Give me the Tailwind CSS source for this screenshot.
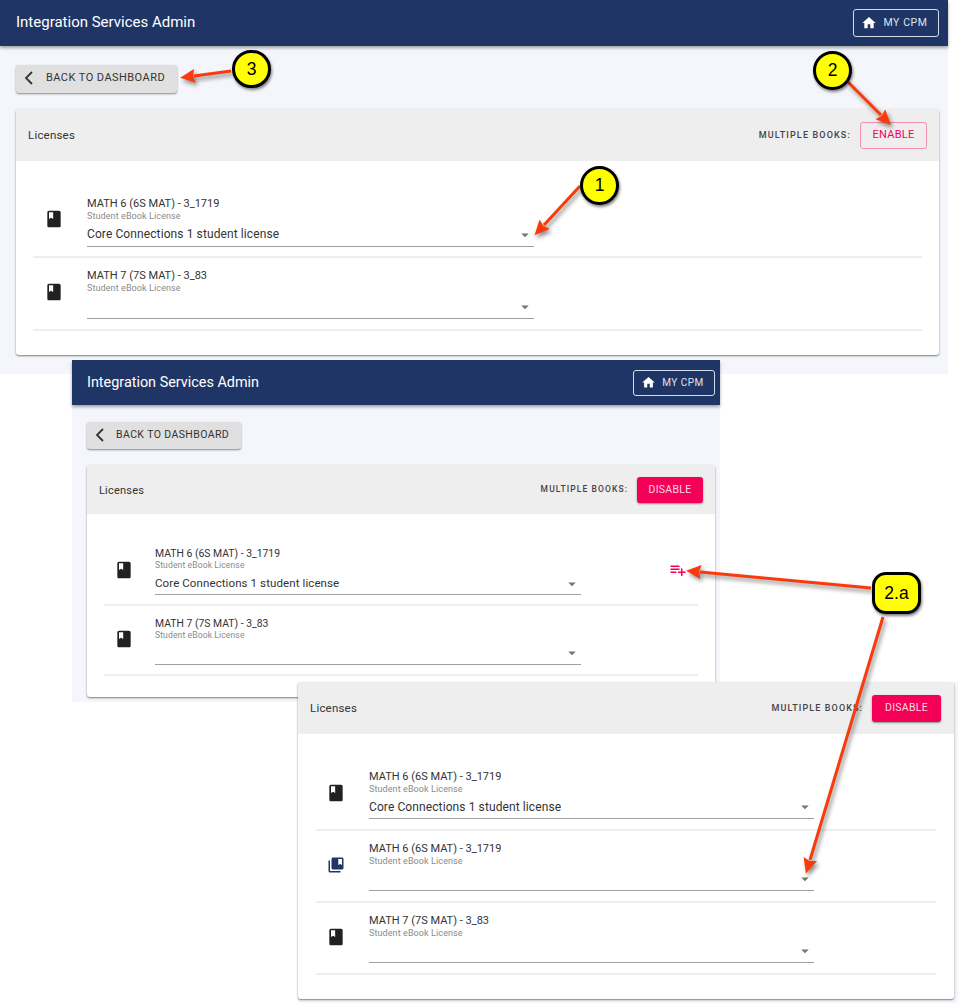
<!DOCTYPE html>
<html lang="en">
<head>
    <meta charset="UTF-8">
    <title>Integration Services Admin</title>
    <script src="https://cdn.jsdelivr.net/npm/@tailwindcss/browser@4"></script>
</head>
<body class="bg-white">
<div class="relative w-[958px] h-[1003px] overflow-hidden font-['Roboto',sans-serif]">

    <!-- screenshot 1 -->
    <section class="absolute left-0 top-0 w-[948px] h-[374px] bg-[#f4f6fb] flex flex-col">
        <header class="h-[46px] shrink-0 bg-[#1f3566] shadow-[0_2px_3px_rgba(0,0,0,0.35)] flex items-center justify-between pl-4 pr-[9px]">
            <span class="pb-[2px] text-white text-[15px]">Integration Services Admin</span>
            <span class="w-[86px] h-[28px] border-[1.5px] border-[#d5dcec] rounded-[3px] flex items-center justify-center gap-[6px] pr-[3px] text-[#dfe4ef] text-[10.5px] tracking-[0.6px]">
                <svg class="w-[16px] h-[16px]" viewBox="0 0 24 24" fill="#fff"><path d="M10 20v-6h4v6h5v-8h3L12 3 2 12h3v8z"/></svg>MY CPM
            </span>
        </header>
        <div class="px-4 pt-[19px]">
            <span class="w-[161px] h-[28px] pb-[2px] bg-[#e0e0e0] rounded-[3px] shadow-[0_1px_2px_rgba(0,0,0,0.45)] flex items-center pl-[8px] gap-[12px] text-[#333] text-[11px] tracking-[0.45px]">
                <svg class="w-[10px] h-[14px]" viewBox="0 0 10 14" fill="none" stroke="#333" stroke-width="1.8"><path d="M8 1L2 7l6 6"/></svg>BACK TO DASHBOARD
            </span>
            <div class="mt-4 w-[923px] h-[246px] bg-white rounded-[3px] shadow-[0_1px_2px_rgba(0,0,0,0.5)]">
                <div class="h-[52px] bg-[#eeeeee] flex items-center justify-between pl-3 pr-3">
                    <span class="pt-[2px] text-[#333] text-[11.5px] tracking-[0.2px]">Licenses</span>
                    <div class="flex items-center gap-[9px]">
                        <span class="pt-[1px] text-[#444] text-[9px] font-medium tracking-[1.15px]">MULTIPLE BOOKS:</span>
                        <span class="w-[67px] h-[27px] border-[1.5px] border-[#f48fb1] rounded-[3px] flex items-center justify-center text-[#f50057] text-[11px] tracking-[0.3px]">ENABLE</span>
                    </div>
                </div>
                <div class="pt-[24px] px-[17px]">
                    <div class="h-[73px] border-b-2 border-[#eeeeee] flex pt-[12px]">
                        <div class="w-[54px] shrink-0 pl-[11px] pt-[12px]">
                            <svg class="w-[20px] h-[20px]" viewBox="0 0 24 24" fill="#212121"><path d="M18 2H6c-1.1 0-2 .9-2 2v16c0 1.1.9 2 2 2h12c1.1 0 2-.9 2-2V4c0-1.1-.9-2-2-2zM6 4h5v8l-2.5-1.5L6 12V4z"/></svg>
                        </div>
                        <div class="w-[447px]">
                            <p class="h-[14px] leading-[14px] text-[#333] text-[11px]">MATH 6 (6S MAT) - 3_1719</p>
                            <p class="h-[11px] leading-[11px] text-[#8a8a8a] text-[9px] tracking-[0.1px]">Student eBook License</p>
                            <div class="h-[25px] border-b-[1.5px] border-[#9e9e9e] flex items-center justify-between text-[#333] text-[12px] tracking-[0.1px]">
                                <span>Core Connections 1 student license</span>
                                <svg class="mt-[2px] w-[18px] h-[18px]" viewBox="0 0 24 24" fill="#757575"><path d="M7 10l5 5 5-5z"/></svg>
                            </div>
                        </div>
                    </div>
                    <div class="h-[73px] border-b-2 border-[#eeeeee] flex pt-[11px]">
                        <div class="w-[54px] shrink-0 pl-[11px] pt-[13px]">
                            <svg class="w-[20px] h-[20px]" viewBox="0 0 24 24" fill="#212121"><path d="M18 2H6c-1.1 0-2 .9-2 2v16c0 1.1.9 2 2 2h12c1.1 0 2-.9 2-2V4c0-1.1-.9-2-2-2zM6 4h5v8l-2.5-1.5L6 12V4z"/></svg>
                        </div>
                        <div class="w-[447px]">
                            <p class="h-[14px] leading-[14px] text-[#333] text-[11px]">MATH 7 (7S MAT) - 3_83</p>
                            <p class="h-[11px] leading-[11px] text-[#8a8a8a] text-[9px] tracking-[0.1px]">Student eBook License</p>
                            <div class="h-[25px] border-b-[1.5px] border-[#9e9e9e] flex items-center justify-end">
                                <svg class="mt-[2px] w-[18px] h-[18px]" viewBox="0 0 24 24" fill="#757575"><path d="M7 10l5 5 5-5z"/></svg>
                            </div>
                        </div>
                    </div>
                </div>
            </div>
        </div>
    </section>

    <!-- screenshot 2 -->
    <section class="absolute left-[72px] top-[360px] w-[648px] h-[342px] bg-[#f4f6fb] flex flex-col">
        <header class="h-[45px] shrink-0 bg-[#1f3566] shadow-[0_2px_3px_rgba(0,0,0,0.35)] flex items-center justify-between pl-[15px] pr-[5px]">
            <span class="text-white text-[14.4px]">Integration Services Admin</span>
            <span class="w-[82px] h-[26px] border-[1.5px] border-[#d5dcec] rounded-[3px] flex items-center justify-center gap-[6px] pr-[3px] text-[#dfe4ef] text-[10px] tracking-[0.5px]">
                <svg class="w-[15px] h-[15px]" viewBox="0 0 24 24" fill="#fff"><path d="M10 20v-6h4v6h5v-8h3L12 3 2 12h3v8z"/></svg>MY CPM
            </span>
        </header>
        <div class="px-[15px] pt-[17px]">
            <span class="w-[154px] h-[27px] pb-[2px] bg-[#e0e0e0] rounded-[3px] shadow-[0_1px_2px_rgba(0,0,0,0.45)] flex items-center pl-[8px] gap-[11px] text-[#333] text-[10.5px] tracking-[0.4px]">
                <svg class="w-[10px] h-[14px]" viewBox="0 0 10 14" fill="none" stroke="#333" stroke-width="1.8"><path d="M8 1L2 7l6 6"/></svg>BACK TO DASHBOARD
            </span>
            <div class="mt-4 w-[628px] h-[232px] bg-white rounded-[3px] shadow-[0_1px_2px_rgba(0,0,0,0.5)]">
                <div class="h-[49px] bg-[#eeeeee] flex items-center justify-between pl-3 pr-3">
                    <span class="pt-[3px] text-[#333] text-[11px] tracking-[0.2px]">Licenses</span>
                    <div class="flex items-center gap-[9px]">
                        <span class="text-[#444] text-[8.5px] font-medium tracking-[1.1px]">MULTIPLE BOOKS:</span>
                        <span class="w-[66px] h-[26px] bg-[#f50057] rounded-[3px] shadow-[0_1px_2px_rgba(0,0,0,0.4)] flex items-center justify-center text-[#ffd6e4] text-[10.5px] tracking-[0.3px]">DISABLE</span>
                    </div>
                </div>
                <div class="pt-[22px] px-[17px]">
                    <div class="h-[70px] border-b-2 border-[#eeeeee] flex pt-[11px]">
                        <div class="w-[51px] shrink-0 pl-[10px] pt-[13px]">
                            <svg class="w-[20px] h-[20px]" viewBox="0 0 24 24" fill="#212121"><path d="M18 2H6c-1.1 0-2 .9-2 2v16c0 1.1.9 2 2 2h12c1.1 0 2-.9 2-2V4c0-1.1-.9-2-2-2zM6 4h5v8l-2.5-1.5L6 12V4z"/></svg>
                        </div>
                        <div class="w-[426px]">
                            <p class="h-[13px] leading-[13px] text-[#333] text-[10.4px]">MATH 6 (6S MAT) - 3_1719</p>
                            <p class="h-[11px] leading-[11px] text-[#8a8a8a] text-[8.6px] tracking-[0.1px]">Student eBook License</p>
                            <div class="h-[24px] pt-[2px] border-b-[1.5px] border-[#9e9e9e] flex items-center justify-between text-[#333] text-[11.5px] tracking-[0.1px]">
                                <span>Core Connections 1 student license</span>
                                <svg class="w-[18px] h-[18px]" viewBox="0 0 24 24" fill="#757575"><path d="M7 10l5 5 5-5z"/></svg>
                            </div>
                        </div>
                        <div class="ml-auto pr-[11px] pt-[14px]">
                            <svg class="w-[18px] h-[18px]" viewBox="0 0 24 24" fill="#f50057"><path d="M14 10H2v2h12v-2zm0-4H2v2h12V6zm4 8v-4h-2v4h-4v2h4v4h2v-4h4v-2h-4zM2 16h8v-2H2v2z"/></svg>
                        </div>
                    </div>
                    <div class="h-[70px] border-b-2 border-[#eeeeee] flex pt-[11px]">
                        <div class="w-[51px] shrink-0 pl-[10px] pt-[12px]">
                            <svg class="w-[20px] h-[20px]" viewBox="0 0 24 24" fill="#212121"><path d="M18 2H6c-1.1 0-2 .9-2 2v16c0 1.1.9 2 2 2h12c1.1 0 2-.9 2-2V4c0-1.1-.9-2-2-2zM6 4h5v8l-2.5-1.5L6 12V4z"/></svg>
                        </div>
                        <div class="w-[426px]">
                            <p class="h-[13px] leading-[13px] text-[#333] text-[10.4px]">MATH 7 (7S MAT) - 3_83</p>
                            <p class="h-[11px] leading-[11px] text-[#8a8a8a] text-[8.6px] tracking-[0.1px]">Student eBook License</p>
                            <div class="h-[24px] border-b-[1.5px] border-[#9e9e9e] flex items-center justify-end">
                                <svg class="w-[18px] h-[18px]" viewBox="0 0 24 24" fill="#757575"><path d="M7 10l5 5 5-5z"/></svg>
                            </div>
                        </div>
                    </div>
                </div>
            </div>
        </div>
    </section>

    <!-- screenshot 3 -->
    <section class="absolute left-[298px] top-[682px] w-[660px] h-[321px] bg-[#f4f6fb]">
        <div class="w-[656px] h-[317px] bg-white rounded-[3px] shadow-[0_1px_2px_rgba(0,0,0,0.5)]">
            <div class="h-[52px] bg-[#eeeeee] flex items-center justify-between pl-3 pr-[13px]">
                <span class="pt-[2px] text-[#333] text-[11.5px] tracking-[0.2px]">Licenses</span>
                <div class="flex items-center gap-[9px]">
                    <span class="pt-[1px] text-[#444] text-[9px] font-medium tracking-[1.1px]">MULTIPLE BOOKS:</span>
                    <span class="w-[69px] h-[27px] bg-[#f50057] rounded-[3px] shadow-[0_1px_2px_rgba(0,0,0,0.4)] flex items-center justify-center text-[#ffd6e4] text-[10.5px] tracking-[0.3px]">DISABLE</span>
                </div>
            </div>
            <div class="pt-[25px] pl-[18px] pr-[18px]">
                <div class="h-[72px] border-b-2 border-[#eeeeee] flex pt-[11px]">
                    <div class="w-[53px] shrink-0 pl-[10px] pt-[13px]">
                        <svg class="w-[20px] h-[20px]" viewBox="0 0 24 24" fill="#212121"><path d="M18 2H6c-1.1 0-2 .9-2 2v16c0 1.1.9 2 2 2h12c1.1 0 2-.9 2-2V4c0-1.1-.9-2-2-2zM6 4h5v8l-2.5-1.5L6 12V4z"/></svg>
                    </div>
                    <div class="w-[445px]">
                        <p class="h-[14px] leading-[14px] text-[#333] text-[11px]">MATH 6 (6S MAT) - 3_1719</p>
                        <p class="h-[10px] leading-[10px] text-[#8a8a8a] text-[9px] tracking-[0.1px]">Student eBook License</p>
                        <div class="h-[25px] pt-[2px] border-b-[1.5px] border-[#9e9e9e] flex items-center justify-between text-[#333] text-[12px] tracking-[0.1px]">
                            <span>Core Connections 1 student license</span>
                            <svg class="w-[18px] h-[18px]" viewBox="0 0 24 24" fill="#757575"><path d="M7 10l5 5 5-5z"/></svg>
                        </div>
                    </div>
                </div>
                <div class="h-[72px] border-b-2 border-[#eeeeee] flex pt-[11px]">
                    <div class="w-[53px] shrink-0 pl-[11px] pt-[14px]">
                        <svg class="w-[18px] h-[18px]" viewBox="0 0 24 24" fill="#1f3566"><path d="M4 6H2v14c0 1.1.9 2 2 2h14v-2H4V6zm16-4H8c-1.1 0-2 .9-2 2v12c0 1.1.9 2 2 2h12c1.1 0 2-.9 2-2V4c0-1.1-.9-2-2-2zm0 10l-2.5-1.5L15 12V4h5v8z"/></svg>
                    </div>
                    <div class="w-[445px]">
                        <p class="h-[14px] leading-[14px] text-[#333] text-[11px]">MATH 6 (6S MAT) - 3_1719</p>
                        <p class="h-[10px] leading-[10px] text-[#8a8a8a] text-[9px] tracking-[0.1px]">Student eBook License</p>
                        <div class="h-[25px] pt-[2px] border-b-[1.5px] border-[#9e9e9e] flex items-center justify-end">
                            <svg class="w-[18px] h-[18px]" viewBox="0 0 24 24" fill="#757575"><path d="M7 10l5 5 5-5z"/></svg>
                        </div>
                    </div>
                </div>
                <div class="h-[72px] border-b-2 border-[#eeeeee] flex pt-[11px]">
                    <div class="w-[53px] shrink-0 pl-[10px] pt-[13px]">
                        <svg class="w-[20px] h-[20px]" viewBox="0 0 24 24" fill="#212121"><path d="M18 2H6c-1.1 0-2 .9-2 2v16c0 1.1.9 2 2 2h12c1.1 0 2-.9 2-2V4c0-1.1-.9-2-2-2zM6 4h5v8l-2.5-1.5L6 12V4z"/></svg>
                    </div>
                    <div class="w-[445px]">
                        <p class="h-[14px] leading-[14px] text-[#333] text-[11px]">MATH 7 (7S MAT) - 3_83</p>
                        <p class="h-[10px] leading-[10px] text-[#8a8a8a] text-[9px] tracking-[0.1px]">Student eBook License</p>
                        <div class="h-[25px] pt-[2px] border-b-[1.5px] border-[#9e9e9e] flex items-center justify-end">
                            <svg class="w-[18px] h-[18px]" viewBox="0 0 24 24" fill="#757575"><path d="M7 10l5 5 5-5z"/></svg>
                        </div>
                    </div>
                </div>
            </div>
        </div>
    </section>

    <!-- arrows -->
    <svg class="absolute left-0 top-0 w-[958px] h-[1003px] drop-shadow-[2px_3px_2px_rgba(0,0,0,0.45)]" viewBox="0 0 958 1003" fill="none" stroke="#fa3a0c" stroke-width="3">
        <defs>
            <marker id="head" markerUnits="userSpaceOnUse" markerWidth="16" markerHeight="14" refX="1" refY="7" orient="auto">
                <path d="M0 0L15 7L0 14L2 7z" fill="#fa3a0c" stroke="none"/>
            </marker>
        </defs>
        <line x1="231" y1="71" x2="194" y2="76" marker-end="url(#head)"/>
        <line x1="848" y1="82" x2="881" y2="115" marker-end="url(#head)"/>
        <line x1="580" y1="186" x2="544" y2="225" marker-end="url(#head)"/>
        <line x1="871" y1="588" x2="700" y2="572" marker-end="url(#head)"/>
        <line x1="883" y1="617" x2="810" y2="860" marker-end="url(#head)"/>
    </svg>

    <!-- callouts -->
    <span class="absolute left-[232px] top-[50px] w-[39px] h-[38px] rounded-full bg-[#ffff00] border-[3.5px] border-black shadow-[1px_2px_3px_rgba(0,0,0,0.5)] flex items-center justify-center font-['Liberation_Sans',sans-serif] text-black text-[17.5px]">3</span>
    <span class="absolute left-[813px] top-[51px] w-[39px] h-[39px] rounded-full bg-[#ffff00] border-[3.5px] border-black shadow-[1px_2px_3px_rgba(0,0,0,0.5)] flex items-center justify-center font-['Liberation_Sans',sans-serif] text-black text-[17.5px]">2</span>
    <span class="absolute left-[580px] top-[166px] w-[39px] h-[39px] rounded-full bg-[#ffff00] border-[3.5px] border-black shadow-[1px_2px_3px_rgba(0,0,0,0.5)] flex items-center justify-center font-['Liberation_Sans',sans-serif] text-black text-[17.5px]">1</span>
    <span class="absolute left-[872px] top-[572px] w-[49px] h-[42px] rounded-[14px] bg-[#ffff00] border-[3.5px] border-black shadow-[1px_2px_3px_rgba(0,0,0,0.5)] flex items-center justify-center font-['Liberation_Sans',sans-serif] text-black text-[17.5px]">2.a</span>
</div>
</body>
</html>
